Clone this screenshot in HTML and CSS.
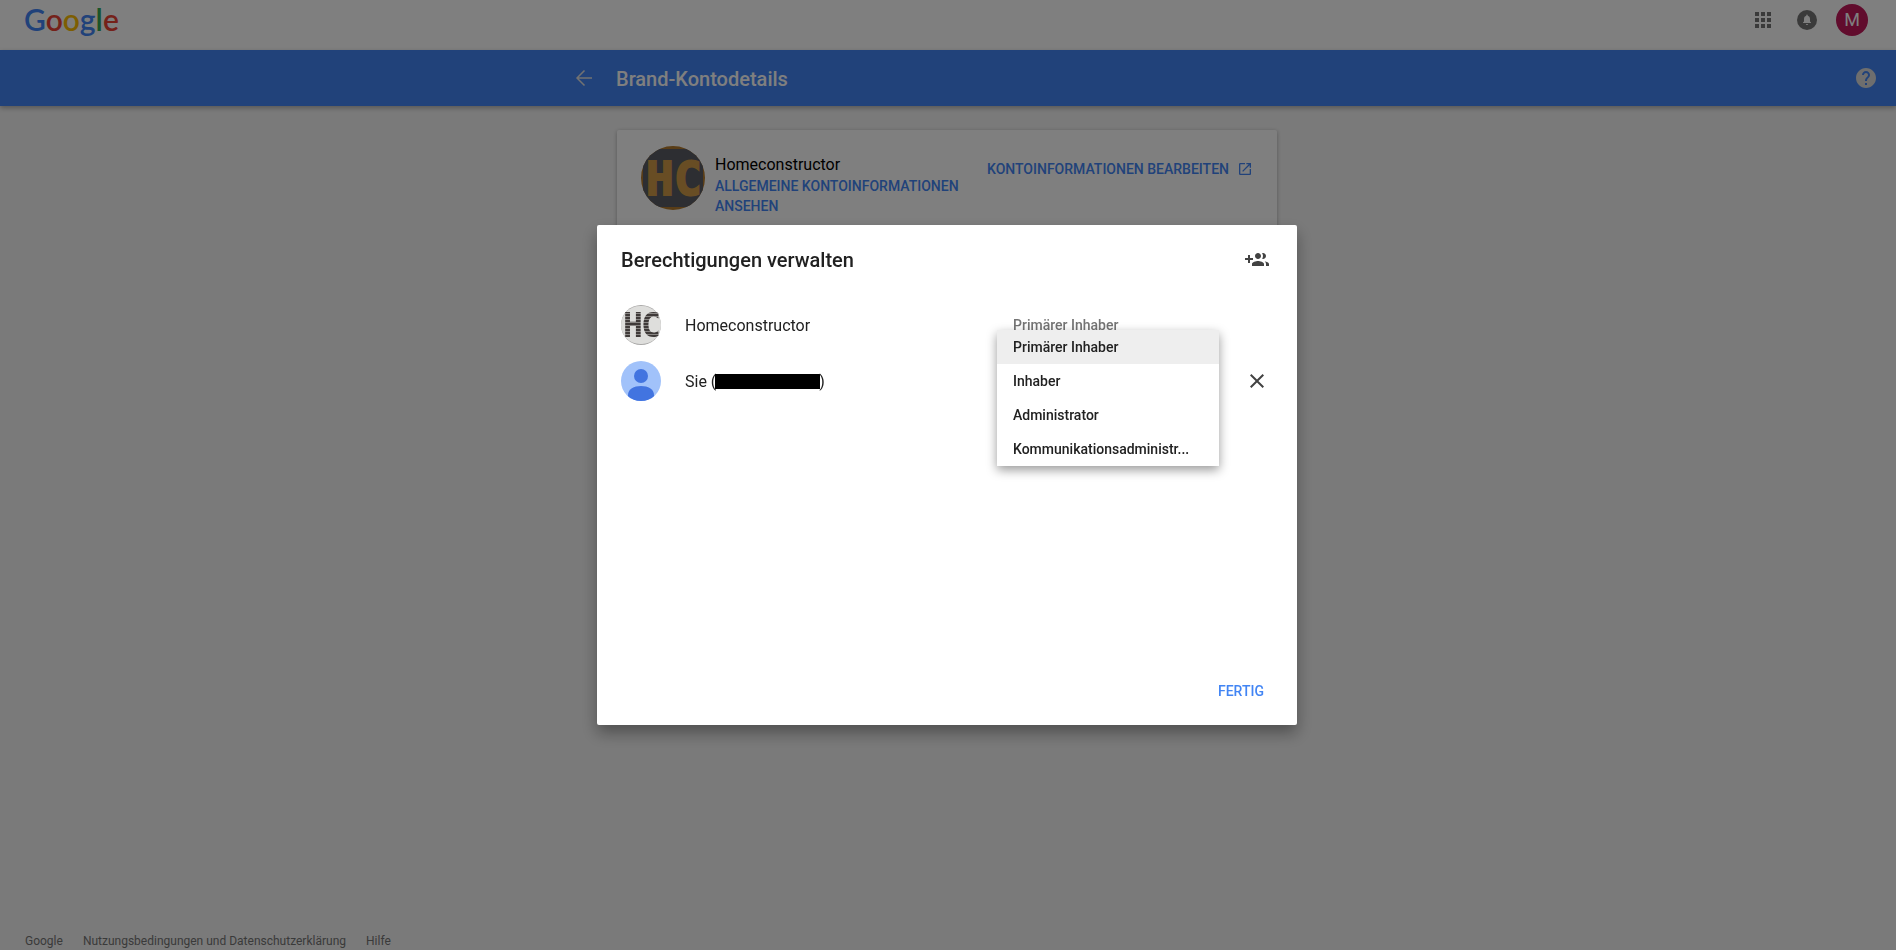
FILE: index.html
```html
<!DOCTYPE html>
<html lang="de">
<head>
    <meta charset="UTF-8">
    <meta name="viewport" content="width=device-width, initial-scale=1.0">
    <title>Brand-Kontodetails</title>
    <link rel="stylesheet" href="styles.css">
</head>
<body>

    <header class="topbar">
        <a class="logo" href="#"><span class="blue">G</span><span class="red">o</span><span class="yellow">o</span><span class="blue">g</span><span class="green">l</span><span class="red">e</span></a>
        <div class="topbar-actions">
            <button class="icon-button" aria-label="Google-Apps">
                <svg width="24" height="24" viewBox="0 0 24 24" fill="#757575"><path d="M4 4h4v4H4zM10 4h4v4h-4zM16 4h4v4h-4zM4 10h4v4H4zM10 10h4v4h-4zM16 10h4v4h-4zM4 16h4v4H4zM10 16h4v4h-4zM16 16h4v4h-4z"/></svg>
            </button>
            <button class="icon-button" aria-label="Benachrichtigungen">
                <svg width="24" height="24" viewBox="0 0 24 24"><circle cx="12" cy="12" r="10" fill="#757575"/><path fill="#fff" d="M12 17a1.200 1.200 0 0 0 1.200-1.100h-2.400A1.200 1.200 0 0 0 12 17zM15 13.500V11c0-1.700-.9-3-2.300-3.300v-.4a.7.7 0 0 0-1.400 0v.4C9.900 8 9 9.300 9 11v2.500l-1 1v.6h8v-.6z"/></svg>
            </button>
            <button class="account">M</button>
        </div>
    </header>

    <div class="titlebar">
        <div class="titlebar-inner">
            <a class="back" href="#" aria-label="Zurück">
                <svg width="24" height="24" viewBox="0 0 24 24" fill="none" stroke="#e4e4e4" stroke-width="1.500"><path d="M20 12H5M12.500 4.500L5 12l7.500 7.500"/></svg>
            </a>
            <h1>Brand-Kontodetails</h1>
        </div>
        <button class="icon-button" aria-label="Hilfe">
            <svg width="24" height="24" viewBox="0 0 24 24" fill="#dcdcdc"><path d="M12 2C6.480 2 2 6.480 2 12s4.480 10 10 10 10-4.480 10-10S17.520 2 12 2zm1 17h-2v-2h2v2zm2.070-7.750l-.9.920C13.450 12.900 13 13.500 13 15h-2v-.5c0-1.100.450-2.100 1.170-2.830l1.240-1.260c.370-.360.590-.860.590-1.410 0-1.100-.9-2-2-2s-2 .9-2 2H8c0-2.210 1.790-4 4-4s4 1.790 4 4c0 .880-.360 1.680-.930 2.250z"/></svg>
        </button>
    </div>

    <main class="content">
        <section class="card">
            <svg class="avatar-large" viewBox="0 0 64 64" role="img" aria-label="Homeconstructor">
                <clipPath id="round"><circle cx="32" cy="32" r="32"/></clipPath>
                <g clip-path="url(#round)">
                    <rect width="64" height="64" fill="#b37a2e"/>
                    <rect x="2" y="3" width="60" height="58" fill="#5a5c64"/>
                    <text class="brand" x="5 33" y="49" font-size="46" fill="#d09a48" stroke="#d09a48" stroke-width="2">HC</text>
                </g>
            </svg>
            <div class="card-text">
                <div class="card-name">Homeconstructor</div>
                <a href="#">ALLGEMEINE KONTOINFORMATIONEN ANSEHEN</a>
            </div>
            <a class="edit" href="#">KONTOINFORMATIONEN BEARBEITEN
                <svg width="16" height="16" viewBox="0 0 24 24" fill="#4285f4"><path d="M19 19H5V5h7V3H5a2 2 0 0 0-2 2v14a2 2 0 0 0 2 2h14c1.100 0 2-.9 2-2v-7h-2v7zM14 3v2h3.590l-9.830 9.830 1.410 1.410L19 6.410V10h2V3h-7z"/></svg>
            </a>
        </section>
    </main>

    <footer class="footer">
        <a href="#">Google</a>
        <a href="#">Nutzungsbedingungen und Datenschutzerklärung</a>
        <a href="#">Hilfe</a>
    </footer>

    <div class="overlay">
        <div class="dialog" role="dialog" aria-labelledby="dialog-title">
            <div class="dialog-head">
                <h2 id="dialog-title">Berechtigungen verwalten</h2>
                <button class="icon-button" aria-label="Nutzer hinzufügen">
                    <svg width="24" height="24" viewBox="0 0 24 24" fill="#424242"><path d="M8 10H5V7H3v3H0v2h3v3h2v-3h3v-2zm10 1c1.660 0 2.990-1.340 2.990-3S19.660 5 18 5c-.320 0-.630.050-.910.140.570.810.9 1.790.9 2.860s-.340 2.040-.9 2.860c.280.090.590.140.910.140zm-5 0c1.660 0 2.990-1.340 2.990-3S14.660 5 13 5s-3 1.340-3 3 1.340 3 3 3zm6.620 2.160c.830.730 1.380 1.660 1.380 2.840v2h3v-2c0-1.540-2.370-2.490-4.380-2.840zM13 13c-2 0-6 1-6 3v2h12v-2c0-2-4-3-6-3z"/></svg>
                </button>
            </div>

            <ul class="people">
                <li class="person">
                    <svg class="avatar" viewBox="0 0 40 40" role="img" aria-label="Homeconstructor">
                        <pattern id="stripes" width="4" height="3" patternUnits="userSpaceOnUse">
                            <rect width="4" height="3" fill="#8a8785"/>
                            <rect width="4" height="2" fill="#3f3a39"/>
                        </pattern>
                        <circle cx="20" cy="20" r="20" fill="#a9a8a7"/>
                        <rect x="0" y="1" width="40" height="38" rx="19" fill="#dededc"/>
                        <text class="brand" x="2 20" y="32" font-size="33" fill="url(#stripes)">HC</text>
                    </svg>
                    <span class="name">Homeconstructor</span>
                    <div class="role">Primärer Inhaber</div>
                </li>
                <li class="person">
                    <svg class="avatar" viewBox="0 0 40 40" aria-hidden="true">
                        <clipPath id="round-small"><circle cx="20" cy="20" r="20"/></clipPath>
                        <g clip-path="url(#round-small)">
                            <rect width="40" height="40" fill="#a1c2fa"/>
                            <circle cx="20" cy="15" r="7" fill="#4274e0"/>
                            <path fill="#4274e0" d="M7 40v-6c0-6 6-9 13-9s13 3 13 9v6z"/>
                        </g>
                    </svg>
                    <span class="name">Sie (<span class="redacted"></span>)</span>
                    <div class="role">
                        <div class="menu" role="listbox" aria-label="Rolle">
                            <button class="option selected" role="option" aria-selected="true">Primärer Inhaber</button>
                            <button class="option" role="option">Inhaber</button>
                            <button class="option" role="option">Administrator</button>
                            <button class="option" role="option">Kommunikationsadministr...</button>
                        </div>
                    </div>
                    <button class="icon-button" aria-label="Entfernen">
                        <svg width="24" height="24" viewBox="0 0 24 24" fill="#424242"><path d="M19 6.410L17.590 5 12 10.590 6.410 5 5 6.410 10.590 12 5 17.590 6.410 19 12 13.410 17.590 19 19 17.590 13.410 12z"/></svg>
                    </button>
                </li>
            </ul>

            <div class="dialog-actions">
                <button class="done">FERTIG</button>
            </div>
        </div>
    </div>

</body>
</html>
```
FILE: styles.css
```css
* {
    box-sizing: border-box;
}
body {
    margin: 0;
    min-height: 100vh;
    display: flex;
    flex-direction: column;
    font-family: Roboto, Arial, sans-serif;
    font-size: 14px;
    line-height: 20px;
    color: #212121;
    background-color: #f5f5f5;
}
h1, h2 {
    margin: 0;
    font-size: 20px;
    line-height: 24px;
    font-weight: 500;
}
a {
    color: #4285f4;
    font-weight: 500;
    text-decoration: none;
}
button {
    border: none;
    padding: 0;
    background: none;
    font: inherit;
    color: inherit;
    cursor: pointer;
}
svg {
    display: block;
    flex-shrink: 0;
}

.topbar {
    height: 50px;
    display: flex;
    justify-content: space-between;
    align-items: flex-start;
    padding: 4px 28px 0 24px;
    background-color: white;
}
.logo {
    font-family: Lato, sans-serif;
    font-size: 30px;
    line-height: 30px;
    font-weight: 600;
}
.blue { color: #4285f4; }
.red { color: #ea4335; }
.yellow { color: #fbbc05; }
.green { color: #34a853; }
.topbar-actions {
    display: flex;
    align-items: center;
    gap: 20px;
}
.icon-button {
    display: flex;
    align-items: center;
    justify-content: center;
}
.account {
    width: 32px;
    height: 32px;
    margin-left: -3px;
    border-radius: 50%;
    background-color: #c2185b;
    color: white;
    font-size: 18px;
}

.titlebar {
    height: 56px;
    display: grid;
    grid-template-columns: 1fr 660px 1fr;
    align-items: center;
    padding: 0 18px 0 16px;
    background-color: #4285f4;
    box-shadow: 0 2px 5px rgba(0, 0, 0, 0.3);
    color: white;
}
.titlebar-inner {
    grid-column: 2;
    display: flex;
    align-items: center;
    gap: 20px;
    margin-left: -45px;
}
.titlebar h1 {
    padding-top: 2px;
}
.titlebar .icon-button {
    justify-self: end;
}

.content {
    flex: 1;
    padding: 24px 2px 24px 0;
}
.card {
    max-width: 660px;
    min-height: 240px;
    margin: 0 auto;
    padding: 16px 24px;
    display: flex;
    align-items: flex-start;
    gap: 10px;
    background-color: white;
    border-radius: 2px;
    box-shadow: 0 1px 4px rgba(0, 0, 0, 0.3);
}
.avatar-large {
    width: 64px;
    height: 64px;
}
.brand {
    font-family: "DejaVu Sans Mono", monospace;
    font-weight: 700;
}
.card-text {
    flex: 1;
    padding-top: 8px;
}
.card-name {
    font-size: 16px;
    line-height: 22px;
    color: black;
}
.edit {
    display: flex;
    align-items: center;
    gap: 8px;
    padding-top: 13px;
}

.footer {
    display: flex;
    gap: 20px;
    padding: 0 25px;
    font-size: 12px;
    line-height: 18px;
}
.footer a {
    color: #757575;
    font-weight: 400;
}

.overlay {
    position: fixed;
    inset: 0;
    display: flex;
    align-items: center;
    justify-content: center;
    padding-right: 2px;
    background-color: rgba(0, 0, 0, 0.5);
}
.dialog {
    width: 100%;
    max-width: 700px;
    min-height: 500px;
    display: flex;
    flex-direction: column;
    padding: 23px 24px 24px;
    background-color: white;
    border-radius: 2px;
    box-shadow: 0 8px 16px rgba(0, 0, 0, 0.35);
}
.dialog-head {
    display: flex;
    align-items: center;
    justify-content: space-between;
    padding-right: 4px;
}
.people {
    flex: 1;
    margin: 0;
    padding: 25px 0 0;
    list-style: none;
}
.person {
    height: 56px;
    display: grid;
    grid-template-columns: 40px 1fr 222px 24px;
    column-gap: 26px;
    align-items: center;
    padding-right: 4px;
}
.avatar {
    width: 40px;
    height: 40px;
}
.name {
    margin-left: -2px;
    padding-top: 2px;
    font-size: 16px;
}
.redacted {
    display: inline-block;
    width: 105px;
    height: 15px;
    margin: 0 -1px;
    vertical-align: -2px;
    background-color: black;
}
.role {
    position: relative;
    height: 20px;
    padding: 0 16px;
    font-weight: 500;
    color: #757575;
}
.menu {
    position: absolute;
    top: -41px;
    left: 0;
    width: 100%;
    display: flex;
    flex-direction: column;
    background-color: white;
    color: #212121;
    box-shadow: 0 4px 10px rgba(0, 0, 0, 0.4);
}
.option {
    height: 34px;
    padding: 0 16px;
    text-align: left;
}
.selected {
    background-color: #eeeeee;
}
.dialog-actions {
    display: flex;
    justify-content: flex-end;
    padding-right: 9px;
}
.done {
    color: #4285f4;
    font-weight: 500;
}
```
